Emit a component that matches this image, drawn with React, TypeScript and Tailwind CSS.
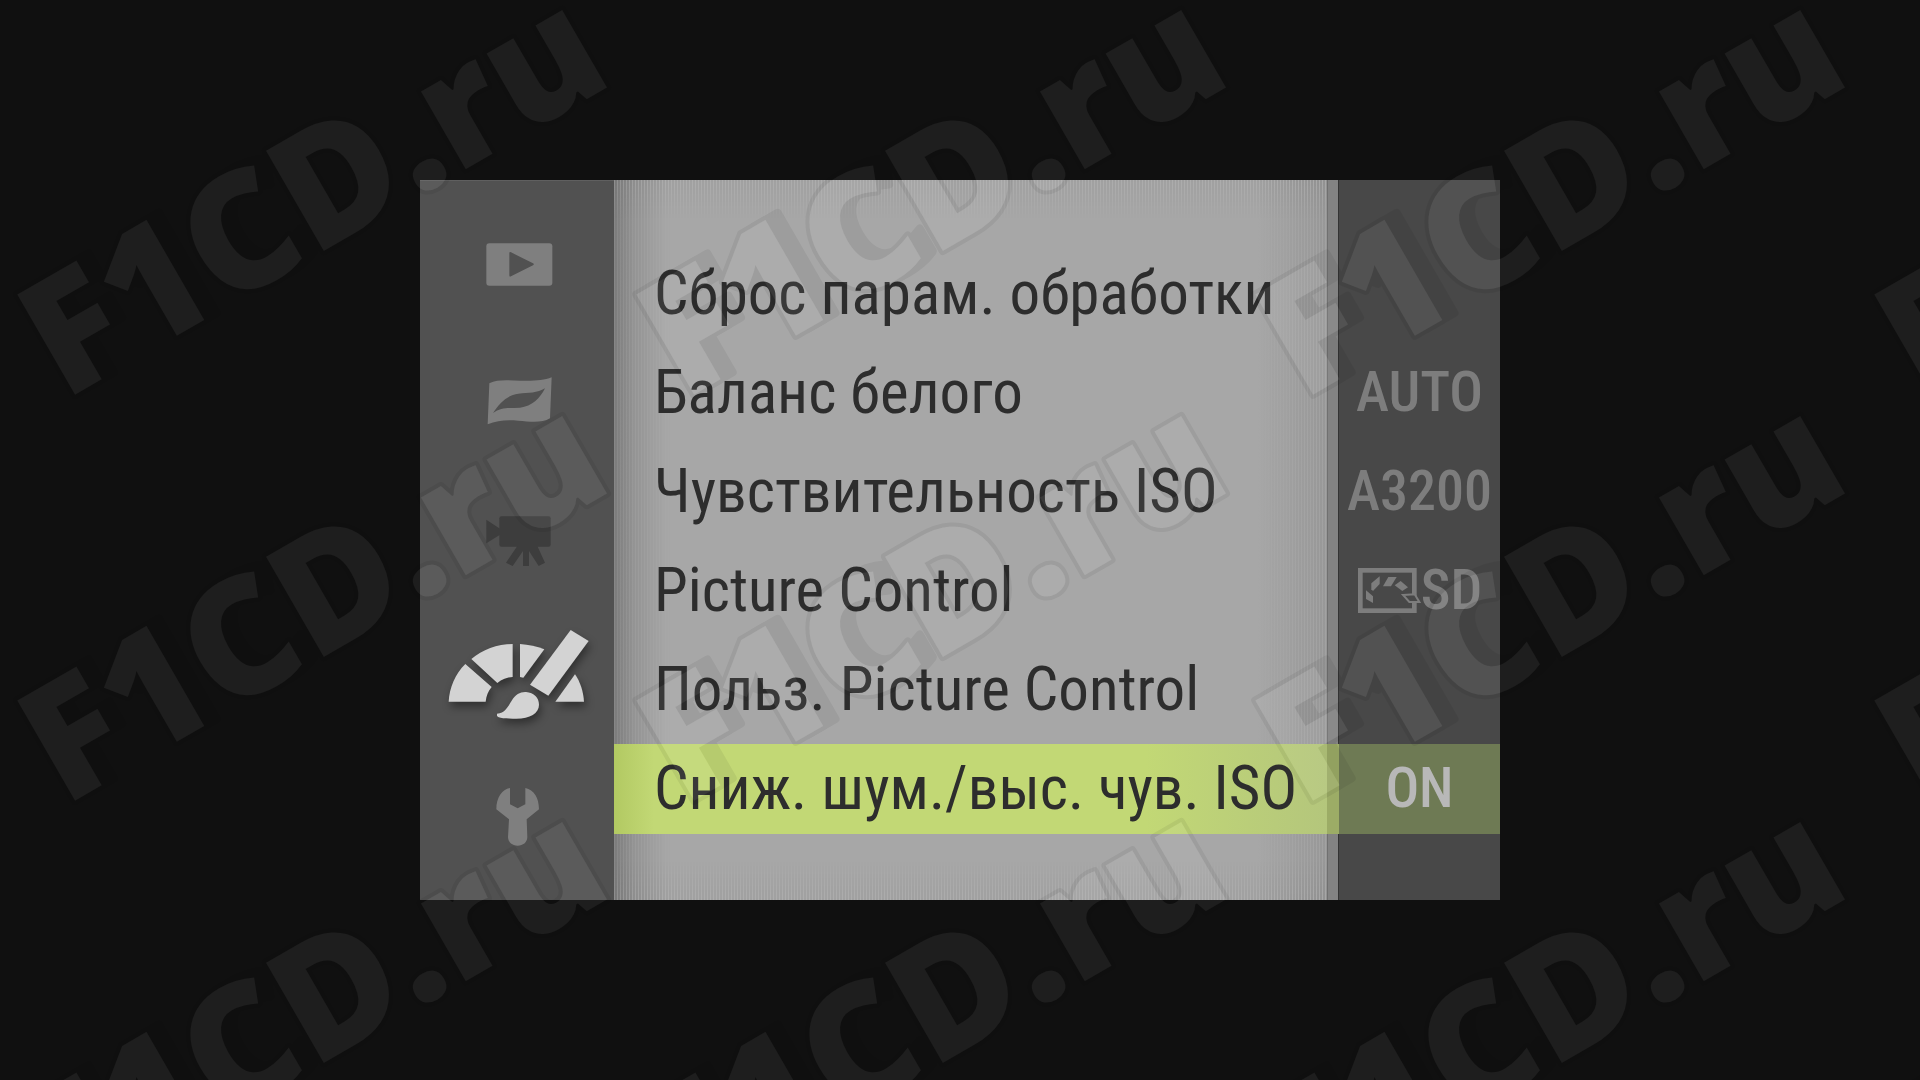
import React, { useState } from 'react';
import clsx from 'clsx';

type Tab = {
  label: string;
  icon: React.ReactNode;
};

type Item = {
  label: string;
  value?: React.ReactNode;
};

const PlaybackIcon = () => (
  <svg viewBox="30 75 582 414" className="h-[138px] w-[194px] text-[#7f7f7f]" aria-hidden="true">
    <rect x="229" y="220" width="198" height="127" rx="9" fill="currentColor" />
    <path d="M298 250q0-6 5-3l66 33q5 3 0 6l-66 33q-5 3-5-3z" fill="#515151" />
  </svg>
);

const EffectsIcon = () => (
  <svg viewBox="30 489 582 414" className="h-[138px] w-[194px] text-[#7f7f7f]" aria-hidden="true">
    <path
      d="M238 640C262 628 290 631 330 632C370 633 400 632 425 622L420 745C395 760 360 755 325 752C290 749 262 751 233 763Z"
      fill="currentColor"
    />
    <path
      d="M249 729C268 700 292 675 325 671C356 668 382 670 405 655C390 685 366 709 330 713C300 715 274 710 249 729Z"
      fill="#515151"
    />
  </svg>
);

const MovieIcon = () => (
  <svg viewBox="30 903 582 414" className="h-[138px] w-[194px] text-[#3d3d3d]" aria-hidden="true">
    <rect x="268" y="1039" width="154" height="91" rx="6" fill="currentColor" />
    <path d="M229 1049L270 1076V1094L229 1120Z" fill="currentColor" />
    <path
      d="M312 1128H382L405 1178L386 1188L357 1143V1188H339V1143L308 1188L288 1178L322 1128Z"
      fill="currentColor"
    />
  </svg>
);

const RetouchIcon = () => (
  <svg
    viewBox="0 57 582 414"
    className="h-[138px] w-[194px] text-[#d3d3d3] drop-shadow-[2px_5px_4px_#00000066]"
    aria-hidden="true"
  >
    <path d="M86 335C88 293 106 251 136 222L215 291C204 304 199 318 197 335Z" fill="currentColor" />
    <path d="M154 207C187 179 231 162 278 162V261C261 262 245 268 232 279Z" fill="currentColor" />
    <path d="M300 162C326 164 350 169 373 178L310 263L300 261Z" fill="currentColor" />
    <path d="M465 253C481 276 490 305 492 335H406Z" fill="currentColor" />
    <path d="M452 120L506 153L385 317L330 284Z" fill="currentColor" />
    <path
      d="M231 371C254 370 263 351 275 332C287 313 301 305 318 306C342 308 357 323 357 344C357 370 330 386 289 386C260 386 232 384 231 377Z"
      fill="currentColor"
    />
  </svg>
);

const SetupIcon = () => (
  <svg viewBox="0 471 582 414" className="h-[138px] w-[194px] text-[#7f7f7f]" aria-hidden="true">
    <path
      d="M270 594V643L293 655L316 643V594C342 599 357 623 357 658L320 688L322 742C321 758 309 767 293 767C277 767 265 758 264 742L267 688L229 658C229 623 246 598 270 594Z"
      fill="currentColor"
    />
  </svg>
);

const PictureControlIcon = () => (
  <svg viewBox="294 79 192 141" className="h-[47px] w-[64px] shrink-0" aria-hidden="true">
    <rect x="304" y="89" width="162" height="121" fill="none" stroke="currentColor" strokeWidth="14" />
    <path d="M321 149L342 167V187L321 175Z" fill="currentColor" />
    <path d="M337 128L362 107V130L342 151L337 146Z" fill="currentColor" />
    <path d="M372 137L388 109H413L396 137Z" fill="currentColor" />
    <path d="M407 134L425 121L447 140L430 151Z" fill="currentColor" />
    <path d="M432 163L467 161L481 184L451 184Z" fill="#484848" stroke="currentColor" strokeWidth="6" />
  </svg>
);

const tabs: Tab[] = [
  { label: 'Playback', icon: <PlaybackIcon /> },
  { label: 'Effects', icon: <EffectsIcon /> },
  { label: 'Movie', icon: <MovieIcon /> },
  { label: 'Retouch', icon: <RetouchIcon /> },
  { label: 'Setup', icon: <SetupIcon /> },
];

const items: Item[] = [
  { label: 'Сброс парам. обработки' },
  { label: 'Баланс белого', value: 'AUTO' },
  { label: 'Чувствительность ISO', value: 'A3200' },
  {
    label: 'Picture Control',
    value: (
      <>
        <PictureControlIcon />
        SD
      </>
    ),
  },
  { label: 'Польз. Picture Control' },
  { label: 'Сниж. шум./выс. чув. ISO', value: 'ON' },
];

const marks = [393, 799, 1205].flatMap((y) => [78, 697, 1316, 1935].map((x) => ({ x, y })));

function Watermark() {
  return (
    <svg
      className="pointer-events-none absolute inset-0 h-full w-full font-['Open_Sans',sans-serif] text-[162px] font-extrabold"
      aria-hidden="true"
    >
      <mask id="mark-outside" maskUnits="userSpaceOnUse" x="-40" y="-180" width="720" height="260">
        <rect x="-40" y="-180" width="720" height="260" fill="#fff" />
        <text x="-16" fill="#000">
          F1CD.ru
        </text>
      </mask>
      {marks.map(({ x, y }) => (
        <g key={`${x}-${y}`} transform={`translate(${x} ${y}) rotate(-30)`}>
          <g mask="url(#mark-outside)">
            <g opacity="0.06" stroke="#000" strokeWidth="8" strokeLinejoin="round">
              <text x="-16">F1CD.ru</text>
              <text x="-2">F1C</text>
            </g>
          </g>
          <text x="-16" fill="#fff" fillOpacity="0.06">
            F1CD.ru
          </text>
        </g>
      ))}
    </svg>
  );
}

function Backdrop() {
  return (
    <div className="absolute inset-0 flex" aria-hidden="true">
      <div className="relative flex-1 bg-[linear-gradient(to_right,#808080,#979797_20px,#a7a7a7_52px,#a7a7a7_calc(100%-70px),#9d9d9d)]">
        <div className="absolute inset-0 bg-[repeating-linear-gradient(to_right,#ffffff0d_0_1px,#00000008_1px_3px)] [mask-image:linear-gradient(to_right,#000,transparent_60px,transparent_calc(100%-70px),#000)]" />
        <div className="absolute inset-x-0 top-0 h-[40px] bg-[repeating-linear-gradient(to_right,#ffffff12_0_1px,#0000000a_1px_3px)] [mask-image:linear-gradient(#000,transparent)]" />
        <div className="absolute inset-x-0 bottom-0 h-[40px] bg-[repeating-linear-gradient(to_right,#ffffff12_0_1px,#0000000a_1px_3px)] [mask-image:linear-gradient(transparent,#000)]" />
      </div>
      <div className="w-[12px] border-x border-l-[#707070] border-r-[#333333] bg-[#838383]" />
      <div className="w-[161px] bg-[#484848]" />
    </div>
  );
}

function App() {
  const [tab, setTab] = useState(3);
  const [selected, setSelected] = useState(5);

  return (
    <div className="relative flex min-h-screen items-center justify-center overflow-hidden bg-[#101010] font-['Roboto_Condensed','Roboto',sans-serif]">
      <div className="flex w-full max-w-[1080px]">
        <nav className="flex w-[194px] shrink-0 flex-col border-t border-t-[#5f5f5f] bg-[#515151] pt-[14px]">
          {tabs.map(({ label, icon }, i) => (
            <button
              key={label}
              type="button"
              aria-label={label}
              aria-pressed={i === tab}
              onClick={() => setTab(i)}
            >
              {icon}
            </button>
          ))}
        </nav>
        <main className="relative min-w-0 flex-1">
          <Backdrop />
          <ul className="relative flex flex-col gap-[9px] pt-[69px] pb-[66px]">
            {items.map(({ label, value }, i) => (
              <li key={label}>
                <button
                  type="button"
                  onClick={() => setSelected(i)}
                  className={clsx(
                    'flex h-[90px] w-full items-center pb-[2px] text-left whitespace-nowrap',
                    i === selected &&
                      'bg-[linear-gradient(to_right,#b2c962,#c2d875_40px,#c2d875_60%,#b4c67c_calc(100%-173px),#9cac66_calc(100%-173px),#9cac66_calc(100%-161px),#6e7a54_calc(100%-161px))]'
                  )}
                >
                  <span className="min-w-0 flex-1 pl-10 text-[61px] leading-[86px] text-[#2d2d2d]">{label}</span>
                  <span
                    className={clsx(
                      'flex w-[161px] shrink-0 items-center justify-center text-[56px] leading-[86px] font-medium',
                      i === selected ? 'text-[#b8b8b8]' : 'text-[#7d7d7d]'
                    )}
                  >
                    {value}
                  </span>
                </button>
              </li>
            ))}
          </ul>
        </main>
      </div>
      <Watermark />
    </div>
  );
}

export default App;
